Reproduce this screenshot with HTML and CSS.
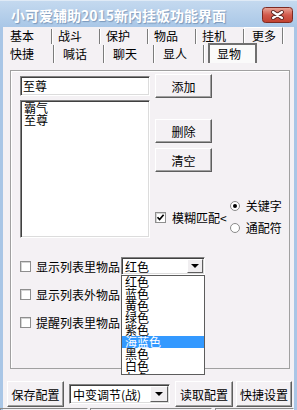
FILE: index.html
```html
<!DOCTYPE html>
<html lang="zh-CN">
<head>
    <meta charset="UTF-8">
    <title>小可爱辅助2015新内挂饭功能界面</title>
    <link rel="stylesheet" href="styles.css">
</head>
<body>
<div class="window">
    <div class="titlebar">
        <span class="title">小可爱辅助2015新内挂饭功能界面</span>
        <span class="close">
            <svg width="31" height="16" viewBox="0 0 31 16">
                <defs>
                    <linearGradient id="cg" x1="0" y1="0" x2="0" y2="1">
                        <stop offset="0" stop-color="#eaa99b"/>
                        <stop offset="0.5" stop-color="#d25a4c"/>
                        <stop offset="1" stop-color="#c1402f"/>
                    </linearGradient>
                </defs>
                <rect x="0.5" y="0.5" width="30" height="15" rx="3" fill="url(#cg)" stroke="#7d2a22"/>
                <path d="M11 5 L20 11 M20 5 L11 11" stroke="#5a2520" stroke-width="4" stroke-linecap="round"/>
                <path d="M11 5 L20 11 M20 5 L11 11" stroke="#fff" stroke-width="2.2" stroke-linecap="round"/>
            </svg>
        </span>
    </div>

    <div class="client">
        <div class="tab-row top-row">
            <span class="tab">基本</span>
            <span class="tab">战斗</span>
            <span class="tab">保护</span>
            <span class="tab">物品</span>
            <span class="tab">挂机</span>
            <span class="tab raised">更多</span>
        </div>
        <div class="tab-row bottom-row">
            <span class="tab">快捷</span>
            <span class="tab">喊话</span>
            <span class="tab">聊天</span>
            <span class="tab">显人</span>
            <span class="tab active">显物</span>
        </div>

        <div class="panel">
            <div class="editor">
                <div class="col-left">
                    <div class="textbox">至尊</div>
                    <div class="listbox">
                        <div>霸气</div>
                        <div>至尊</div>
                    </div>
                </div>
                <div class="col-right">
                    <button class="btn btn-add">添加</button>
                    <button class="btn btn-del">删除</button>
                    <button class="btn btn-clear">清空</button>
                    <div class="match">
                        <label class="check">
                            <span class="box">
                                <svg width="9" height="9" viewBox="0 0 9 9"><polyline points="1.5,4.2 3.6,6.5 7.6,1.8" fill="none" stroke="#000" stroke-width="1.7"/></svg>
                            </span>
                            模糊匹配&lt;
                        </label>
                        <div class="radios">
                            <label class="radio"><span class="dot on"></span>关键字</label>
                            <label class="radio"><span class="dot"></span>通配符</label>
                        </div>
                    </div>
                </div>
            </div>

            <div class="options">
                <div class="opt-row">
                    <span class="box"></span>
                    <span class="opt-label">显示列表里物品</span>
                    <div class="combo color-combo">
                        <span class="combo-text">红色</span>
                        <span class="combo-btn"><i class="arrow"></i></span>
                        <ul class="dropdown">
                            <li>红色</li>
                            <li>蓝色</li>
                            <li>黄色</li>
                            <li>绿色</li>
                            <li>紫色</li>
                            <li class="selected">海蓝色</li>
                            <li>黑色</li>
                            <li>白色</li>
                            <li>灰色</li>
                        </ul>
                    </div>
                </div>
                <div class="opt-row">
                    <span class="box"></span>
                    <span class="opt-label">显示列表外物品</span>
                </div>
                <div class="opt-row">
                    <span class="box"></span>
                    <span class="opt-label">提醒列表里物品</span>
                </div>
            </div>
        </div>

        <div class="bottombar">
            <button class="btn btn-save">保存配置</button>
            <div class="combo mode-combo">
                <span class="combo-text">中变调节(战)</span>
                <span class="combo-btn"><i class="arrow"></i></span>
            </div>
            <button class="btn btn-load">读取配置</button>
            <button class="btn btn-quick">快捷设置</button>
        </div>

        <div class="statusbar">
            <span class="cell cell-a"></span>
            <span class="cell cell-b"></span>
            <span class="cell cell-c"></span>
        </div>
    </div>
</div>
</body>
</html>
```

FILE: styles.css
```css
* {
    box-sizing: border-box;
}
body {
    margin: 0;
    background-color: #f4f1f4;
    font-family: "Noto Sans CJK SC", "Liberation Sans", sans-serif;
    font-size: 12px;
    color: #000;
}
.window {
    width: 297px;
    height: 410px;
    overflow: hidden;
    background-color: #f4f1f4;
}
.titlebar {
    height: 27px;
    display: flex;
    align-items: center;
    justify-content: space-between;
    padding: 2px 4px 0 11px;
    background: linear-gradient(#c4d9ef, #a9c7e7);
    border-top: 1px solid #dfeaf6;
}
.title {
    color: #fff;
    font-size: 14px;
    font-weight: bold;
    line-height: 16px;
    text-shadow: 1px 1px 1px rgba(60, 90, 130, 0.45);
}
.close {
    display: flex;
}
.client {
    height: 383px;
    border-left: 3px solid #a9c6e6;
    border-right: 3px solid #a9c6e6;
}

/* tabs */
.tab-row {
    display: flex;
    padding-left: 1px;
}
.top-row {
    height: 17px;
}
.bottom-row {
    height: 19px;
}
.tab {
    border-right: 1px solid #7c7c7c;
    box-shadow: 1px 0 0 #fff;
}
.top-row .tab {
    width: 48px;
    height: 15px;
    margin-top: 2px;
    padding-left: 6px;
    line-height: 13px;
}
.top-row .tab.raised {
    width: 39px;
    height: 17px;
    margin-top: 0;
    padding-left: 7px;
    line-height: 15px;
    border-top: 1px solid #fff;
    border-left: 1px solid #fff;
}
.bottom-row .tab {
    width: 50px;
    height: 18px;
    margin-top: 1px;
    padding-left: 9px;
    line-height: 17px;
}
.bottom-row .tab:first-child {
    padding-left: 6px;
}
.bottom-row .tab.active {
    width: 49px;
    height: 20px;
    margin-top: -1px;
    margin-left: 4px;
    padding-left: 7px;
    line-height: 18px;
    background-color: #fafafa;
    border: 2px solid #707070;
    border-bottom: none;
    box-shadow: none;
}

/* tab page */
.panel {
    width: 280px;
    height: 299px;
    margin: 7px 0 0 7px;
    padding: 3px 0 0 9px;
    border: 1px solid #a0a0a0;
    box-shadow: inset 1px 1px 0 #fff;
}
.editor {
    display: flex;
    gap: 5px;
}
.col-left {
    width: 130px;
    display: flex;
    flex-direction: column;
}
.textbox,
.listbox,
.combo {
    background-color: #fff;
    border: 1px solid;
    border-color: #828282 #fff #fff #828282;
    box-shadow: inset 1px 1px 0 #404040, inset -1px -1px 0 #dcdcdc;
}
.textbox {
    height: 20px;
    margin-top: 2px;
    padding-left: 2px;
    line-height: 18px;
}
.listbox {
    height: 138px;
    margin-top: 4px;
    padding: 1px 3px;
    line-height: 12px;
}
.col-right {
    display: flex;
    flex-direction: column;
}
.btn {
    display: block;
    padding: 0;
    font: inherit;
    color: #000;
    background-color: #f4f1f4;
    border: 1px solid;
    border-color: #fff #5e5e5e #5e5e5e #fff;
    box-shadow: inset -1px -1px 0 #a0a0a0;
    text-align: center;
}
.col-right .btn {
    width: 57px;
    height: 24px;
}
.btn-del {
    margin-top: 21px;
}
.btn-clear {
    margin-top: 5px;
}
.match {
    height: 35px;
    margin-top: 27px;
    display: flex;
    align-items: center;
}
.check {
    display: flex;
    align-items: center;
    gap: 6px;
    padding-top: 2px;
}
.box {
    width: 11px;
    height: 11px;
    display: flex;
    align-items: center;
    justify-content: center;
    background-color: #fff;
    border: 1px solid #8e8e8e;
    box-shadow: inset 1px 1px 0 #d4d4d4;
}
.radios {
    margin-left: 3px;
    display: flex;
    flex-direction: column;
    gap: 10px;
}
.radio {
    height: 12px;
    display: flex;
    align-items: center;
    gap: 6px;
}
.dot {
    width: 10px;
    height: 10px;
    border-radius: 50%;
    background-color: #fff;
    border: 1px solid #8a8a8a;
    display: flex;
    align-items: center;
    justify-content: center;
}
.dot.on::after {
    content: "";
    width: 4px;
    height: 4px;
    border-radius: 50%;
    background-color: #000;
}

/* item options */
.options {
    margin-top: 19px;
    display: flex;
    flex-direction: column;
    gap: 10px;
}
.opt-row {
    height: 18px;
    display: flex;
    align-items: center;
}
.opt-label {
    margin-left: 5px;
    width: 84px;
}
.combo {
    position: relative;
    display: flex;
    align-items: center;
    justify-content: space-between;
}
.color-combo {
    width: 84px;
    height: 18px;
    margin-left: 1px;
}
.combo-text {
    padding-left: 3px;
    white-space: nowrap;
}
.combo-btn {
    width: 16px;
    height: 14px;
    margin-right: 1px;
    display: flex;
    align-items: center;
    justify-content: center;
    background-color: #f0eef0;
    border: 1px solid;
    border-color: #fff #5e5e5e #5e5e5e #fff;
}
.arrow {
    width: 0;
    height: 0;
    border-left: 4px solid transparent;
    border-right: 4px solid transparent;
    border-top: 4px solid #000;
}
.dropdown {
    position: absolute;
    top: 17px;
    left: -1px;
    z-index: 2;
    width: 84px;
    height: 100px;
    margin: 0;
    padding: 0;
    list-style: none;
    overflow: hidden;
    background-color: #fff;
    border: 1px solid #5c5c5c;
}
.dropdown li {
    height: 12px;
    padding-left: 3px;
    line-height: 12px;
    white-space: nowrap;
}
.dropdown li.selected {
    background-color: #3399ff;
    color: #fff;
}

/* bottom buttons */
.bottombar {
    height: 26px;
    margin-top: 12px;
    padding-left: 4px;
    display: flex;
    align-items: center;
}
.bottombar .btn {
    height: 26px;
}
.btn-save {
    width: 57px;
}
.mode-combo {
    width: 101px;
    height: 20px;
    margin-left: 5px;
}
.mode-combo .combo-btn {
    width: 18px;
    height: 16px;
}
.btn-load {
    width: 58px;
    margin-left: 5px;
}
.btn-quick {
    width: 56px;
    margin-left: 3px;
}
.statusbar {
    display: flex;
    margin: 1px 0 0 -3px;
    height: 3px;
}
.cell {
    height: 3px;
    border-top: 1px solid #8a8a8a;
    border-left: 1px solid #8a8a8a;
    border-right: 1px solid #fff;
}
.cell-a {
    width: 88px;
}
.cell-b {
    width: 122px;
    margin-left: 2px;
}
.cell-c {
    flex: 1;
    margin-left: 3px;
}
```
